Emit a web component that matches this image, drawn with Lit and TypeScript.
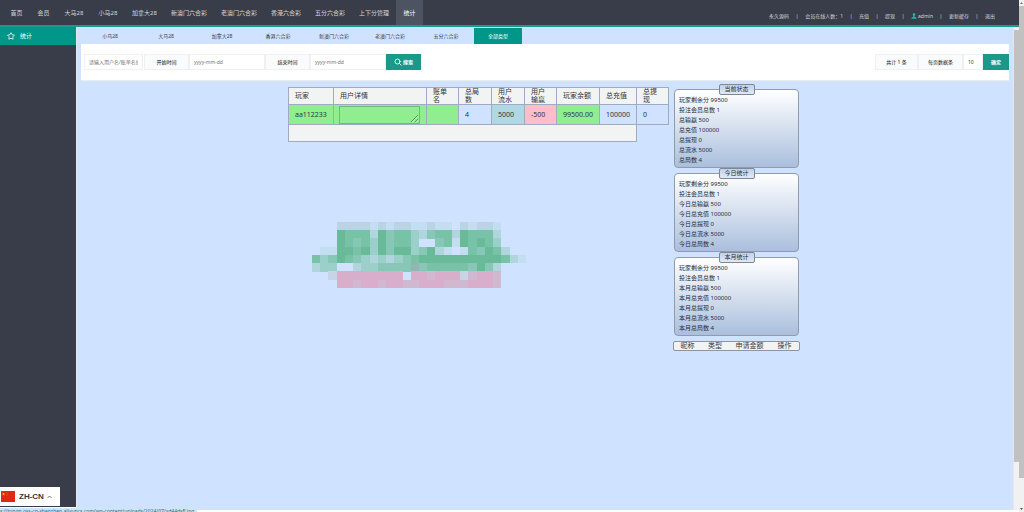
import { LitElement, html, css, svg } from "lit";
import { customElement } from "lit/decorators.js";
import { classMap } from "lit/directives/class-map.js";

const NAV = ["首页", "会员", "大马28", "小马28", "加拿大28", "新澳门六合彩", "老澳门六合彩", "香港六合彩", "五分六合彩", "上下分管理", "统计"];
const TABS = ["小马28", "大马28", "加拿大28", "香港六合彩", "新澳门六合彩", "老澳门六合彩", "五分六合彩", "全部类型"];
const HEADS = ["玩家", "用户详情", "账单名", "总局数", "用户流水", "用户输赢", "玩家余额", "总充值", "总提现"];

const group = (title: string, p: string) => ({
  title,
  lines: ["玩家剩余分 99500", "投注会员总数 1", `${p}总输赢 500`, `${p}总充值 100000`, `${p}总提现 0`, `${p}总流水 5000`, `${p}总局数 4`],
});
const CARDS = [group("当前状态", ""), group("今日统计", "今日"), group("本月统计", "本月")];

const TILES: Record<string, string> = {
  a: "#b9d5e5", b: "#c3def0", g: "#68ba99", h: "#78c2a8", i: "#86c7b6", j: "#9bd0ca",
  k: "#b1d5dc", p: "#d9aeca", q: "#d0b9d0", r: "#93b5b4", s: "#c8d3e6",
};
const MOSAIC = [
  "...aaaababaabbabb.abaab...",
  "...ghhhkgihhjkihhkghhhk...",
  "...ghihjgihhj..ihbghghj...",
  ".bbgghgjgiggjigkb.bhighk..",
  "hjighijkjkjihgggggggggghkb",
  "kjj..kjjiiiirihhhhhigik...",
  "..sppppppppdppqpppsqppq...",
  "...ppqppqppqqpppqqqpppq...",
];

@customElement("tile-mark")
class TileMark extends LitElement {
  static styles = css`
    :host { display: block; }
    svg { display: block; width: 100%; height: auto; }
  `;
  render() {
    return html`<svg viewBox="0 0 26 8" shape-rendering="crispEdges" aria-hidden="true">
      ${MOSAIC.map((row, y) => [...row].map((c, x) => TILES[c]
        ? svg`<rect x=${x} y=${y} width="1.02" height="1.02" fill=${TILES[c]} />` : null))}
    </svg>`;
  }
}

@customElement("app-root")
class AppRoot extends LitElement {
  static styles = css`
    :host {
      display: flex; position: relative; height: 100vh; overflow: hidden; background: #fff;
      font-family: "Noto Sans", "Noto Sans CJK SC", sans-serif; font-size: 6px; line-height: 10px; color: #333d49;
    }
    * { box-sizing: border-box; }
    a { color: inherit; text-decoration: none; }
    button, input, textarea { font: inherit; color: inherit; margin: 0; border-radius: 0; outline: none; }
    .page { flex: 1; min-width: 0; display: flex; flex-direction: column; padding-bottom: 2px; }
    .top { display: flex; justify-content: space-between; background: #393d49; color: #d3d5d9; border-bottom: 2px solid #1c9a8b; }
    .nav { display: grid; grid-template-columns: 27px 27px 34px 34px 39px 50px 50px 44px 44px 44px 27px; padding-left: 3px; }
    .nav a { display: flex; justify-content: center; align-items: center; height: 25px; white-space: nowrap; }
    .nav .on { background: #4d5361; color: #fff; }
    .user { display: flex; align-items: center; gap: 7px; padding: 7px 24px 0 0; font-size: 5px; white-space: nowrap; }
    .user a { display: flex; align-items: center; gap: 1px; }
    .user .sep { display: flex; justify-content: center; width: 2px; }
    .user svg { width: 6px; height: 6px; }
    .body { flex: 1; min-height: 0; display: flex; }
    .side { width: 76px; background: #393d49; margin-bottom: 3px; }
    .side a { display: flex; align-items: center; gap: 5px; height: 18px; padding-left: 7px; background: #009688; color: #fff; }
    .side svg { width: 8px; height: 8px; }
    .frame { flex: 1; min-width: 0; background: #cfe2ff; border-left: 1px solid #e3e9ef; padding: 1px 4px 0; }
    .tabs { display: grid; grid-template-columns: repeat(7, 56px) 48px; font-size: 5px; padding-left: 1px; }
    .tabs a { display: flex; align-items: center; justify-content: center; height: 16px; }
    .tabs .on { background: #009688; color: #fff; }
    .filter { display: flex; justify-content: space-between; background: #fff; padding: 10px 0 10px 3px; font-size: 5px; border-bottom: 1px solid #e9edf2; }
    .filter form { display: flex; }
    .filter label, .filter output { display: flex; align-items: center; justify-content: center; width: 45px; height: 16px; background: #fafbfc; border: 1px solid #eef0f2; color: #111; }
    .filter output { width: 43px; }
    .filter input { width: 76px; height: 16px; border: 1px solid #eef0f2; padding: 0 4px; background: #fff; }
    .filter input::placeholder { color: #757575; opacity: 1; }
    .filter .who { width: 59px; margin-right: 1px; }
    .filter .size { width: 20px; }
    .filter button { display: flex; align-items: center; justify-content: center; gap: 1px; width: 35px; height: 16px; padding: 0; border: 0; background: #1c988a; color: #fff; font-weight: 700; }
    .filter button svg { width: 8px; height: 8px; }
    .filter .ok { width: 26px; }
    .work { display: flex; justify-content: center; align-items: flex-start; gap: 4px; padding: 6px 2px 0 0; }
    .grid { border-collapse: collapse; table-layout: fixed; width: 381px; font-size: 7px; line-height: 8px; color: #2e3540; }
    .grid th, .grid td { border: 1px solid #9eabc2; padding: 0 6px; font-weight: 400; text-align: left; }
    .grid th { height: 17px; padding: 0 8px 0 6px; background: #f2f3f3; }
    .grid td { height: 20px; padding-right: 0; }
    .grid .green { background: #90ee90; }
    .grid .water { background: #b0d8e2; }
    .grid .pink { background: #ffbccb; }
    .grid .name { padding: 0 5px; }
    .grid .sum { height: 17px; background: #f2f3f3; }
    .grid .none { height: 17px; border: 0; }
    .grid textarea { display: block; width: 81px; height: 18px; padding: 0; background: transparent; border: 1px solid #5a9a6c; opacity: 0.6; resize: both; }
    .mark { width: 214px; margin: 80px 0 0 24px; }
    .panel { width: 127px; padding-top: 2px; }
    .card { position: relative; margin: 0 1px 5px; padding: 5px 4px 2px; border: 1px solid #939ba8; border-radius: 4px; background: linear-gradient(#fff, #aabfdd); color: #252c36; }
    .card h2 { position: absolute; top: -6px; left: 50%; width: 36px; height: 11px; margin: 0 0 0 -18px; border: 1px solid #7d8796; border-radius: 2px; background: linear-gradient(#c3d2e8, #dfe9f8); font-size: 6px; line-height: 9px; font-weight: 400; text-align: center; }
    .card p { margin: 0; }
    .apply { width: 127px; border: 1px solid #8f959d; border-radius: 2px; border-spacing: 0; background: #f2f3f3; font-size: 7px; line-height: 8px; table-layout: fixed; }
    .apply th { padding: 0; font-weight: 400; text-align: center; white-space: nowrap; }
    .bar { width: 5px; background: #f1f1f1; }
    .bar i { display: block; background: #c1c1c1; }
    .inner { border-left: 1px solid #e5e5ea; width: 6px; padding-top: 3px; }
    .inner i { height: 90%; }
    .outer { display: flex; flex-direction: column; align-items: center; gap: 2px; padding: 2px 0; }
    .outer i { width: 5px; height: 93%; margin-bottom: auto; }
    .outer svg { width: 3px; height: 2px; }
    .lang { position: absolute; left: 0; bottom: 6px; display: flex; align-items: center; gap: 4px; height: 19px; width: 60px; padding: 0 0 0 1px; border: 0; background: #fff; font: 700 8px/10px "Liberation Sans", sans-serif; color: #2f3742; }
    .lang .flag { width: 14px; height: 11px; }
    .lang .up { width: 5px; height: 4px; margin-left: -1px; }
    .link { position: absolute; left: 0; bottom: 0; width: 197px; height: 4px; overflow: hidden; background: #cfe4f5; color: #2d6f80; font-size: 5px; line-height: 6px; white-space: nowrap; }
  `;

  render() {
    const sep = html`<span class="sep">|</span>`;
    return html`
      <div class="page">
        <header class="top">
          <nav class="nav">${NAV.map((t) => html`<a href="#" class=${classMap({ on: t === "统计" })}>${t}</a>`)}</nav>
          <div class="user">
            <a href="#">永久源码</a>${sep}<span>会员在线人数：1</span>${sep}
            <a href="#">充值</a>${sep}<a href="#">提现</a>${sep}
            <a href="#"><svg viewBox="0 0 12 12" fill="#1fb5a4"><path d="M6 0C4 0 3.400 1.500 3.500 3.200 3.600 4.800 4.300 6 4.800 6.400v1C3.500 8 .8 8.600.5 11.500h11C11.200 8.600 8.500 8 7.200 7.400v-1C7.700 6 8.400 4.800 8.500 3.200 8.600 1.500 8 0 6 0z"/></svg>admin</a>
            ${sep}<a href="#">更新缓存</a>${sep}<a href="#">退出</a>
          </div>
        </header>
        <div class="body">
          <aside class="side">
            <a href="#"><svg viewBox="0 0 16 16" fill="none" stroke="#fff" stroke-width="1.500" stroke-linejoin="round"><path d="M8 1.300l2.200 4.200 4.700.8-3.300 3.400.7 4.700L8 12.500l-4.300 1.900.7-4.700L1.100 6.300l4.700-.8z"/></svg>统计</a>
          </aside>
          <main class="frame">
            <nav class="tabs">${TABS.map((t) => html`<a href="#" class=${classMap({ on: t === "全部类型" })}>${t}</a>`)}</nav>
            <div class="filter">
              <form @submit=${(e: Event) => e.preventDefault()}>
                <input class="who" aria-label="用户名" placeholder="请输入用户名/账单名搜索" />
                <label for="from">开始时间</label><input id="from" placeholder="yyyy-mm-dd" />
                <label for="to">结束时间</label><input id="to" placeholder="yyyy-mm-dd" />
                <button><svg viewBox="0 0 16 16" fill="none" stroke="#fff" stroke-width="1.800" stroke-linecap="round"><circle cx="7" cy="7" r="5"/><path d="M11 11l3.500 3.500"/></svg>搜索</button>
              </form>
              <form @submit=${(e: Event) => e.preventDefault()}>
                <output>共计 1 条</output>
                <label for="size">每页数据条</label><input id="size" class="size" value="10" />
                <button class="ok">确定</button>
              </form>
            </div>
            <div class="work">
              <section>
                <table class="grid">
                  <colgroup>
                    <col width="45" /><col width="93" /><col width="32" /><col width="33" /><col width="33" />
                    <col width="32" /><col width="43" /><col width="37" /><col width="32" />
                  </colgroup>
                  <thead><tr>${HEADS.map((h) => html`<th>${h}</th>`)}</tr></thead>
                  <tbody>
                    <tr>
                      <td class="green">aa112233</td>
                      <td class="green name"><textarea aria-label="用户详情"></textarea></td>
                      <td class="green"></td><td>4</td><td class="water">5000</td><td class="pink">-500</td>
                      <td class="green">99500.00</td><td>100000</td><td>0</td>
                    </tr>
                    <tr><td class="sum" colspan="8"></td><td class="none"></td></tr>
                  </tbody>
                </table>
                <tile-mark class="mark"></tile-mark>
              </section>
              <aside class="panel">
                ${CARDS.map((c) => html`<section class="card"><h2>${c.title}</h2>${c.lines.map((l) => html`<p>${l}</p>`)}</section>`)}
                <table class="apply">
                  <colgroup><col width="27" /><col width="28" /><col width="41" /><col width="29" /></colgroup>
                  <tr><th>昵称</th><th>类型</th><th>申请金额</th><th>操作</th></tr>
                </table>
              </aside>
            </div>
          </main>
          <div class="bar inner"><i></i></div>
        </div>
      </div>
      <div class="bar outer">
        <svg viewBox="0 0 6 4"><path d="M0 4l3-4 3 4z" fill="#777"/></svg><i></i>
        <svg viewBox="0 0 6 4"><path d="M0 0l3 4 3-4z" fill="#555"/></svg>
      </div>
      <button class="lang">
        <svg class="flag" viewBox="0 0 28 22"><path fill="#de2910" d="M0 0h28v22H0z"/><path fill="#ffde00" d="M5 3l.8 2.200H8L6.200 6.600 6.900 9 5 7.600 3.100 9l.7-2.400L2 5.200h2.200z"/><path fill="#f5a000" d="M10 2h1v1h-1zM12 4h1v1h-1zM12 7h1v1h-1zM10 9h1v1h-1z"/></svg>
        ZH-CN
        <svg class="up" viewBox="0 0 10 8" fill="none" stroke="#555" stroke-width="1.600"><path d="M1 6l4-4 4 4"/></svg>
      </button>
      <div class="link">s://tongn.oss-cn-shenzhen.aliyuncs.com/wp-content/uploads/2024/07/xd44dsfl.jpg</div>
    `;
  }
}
